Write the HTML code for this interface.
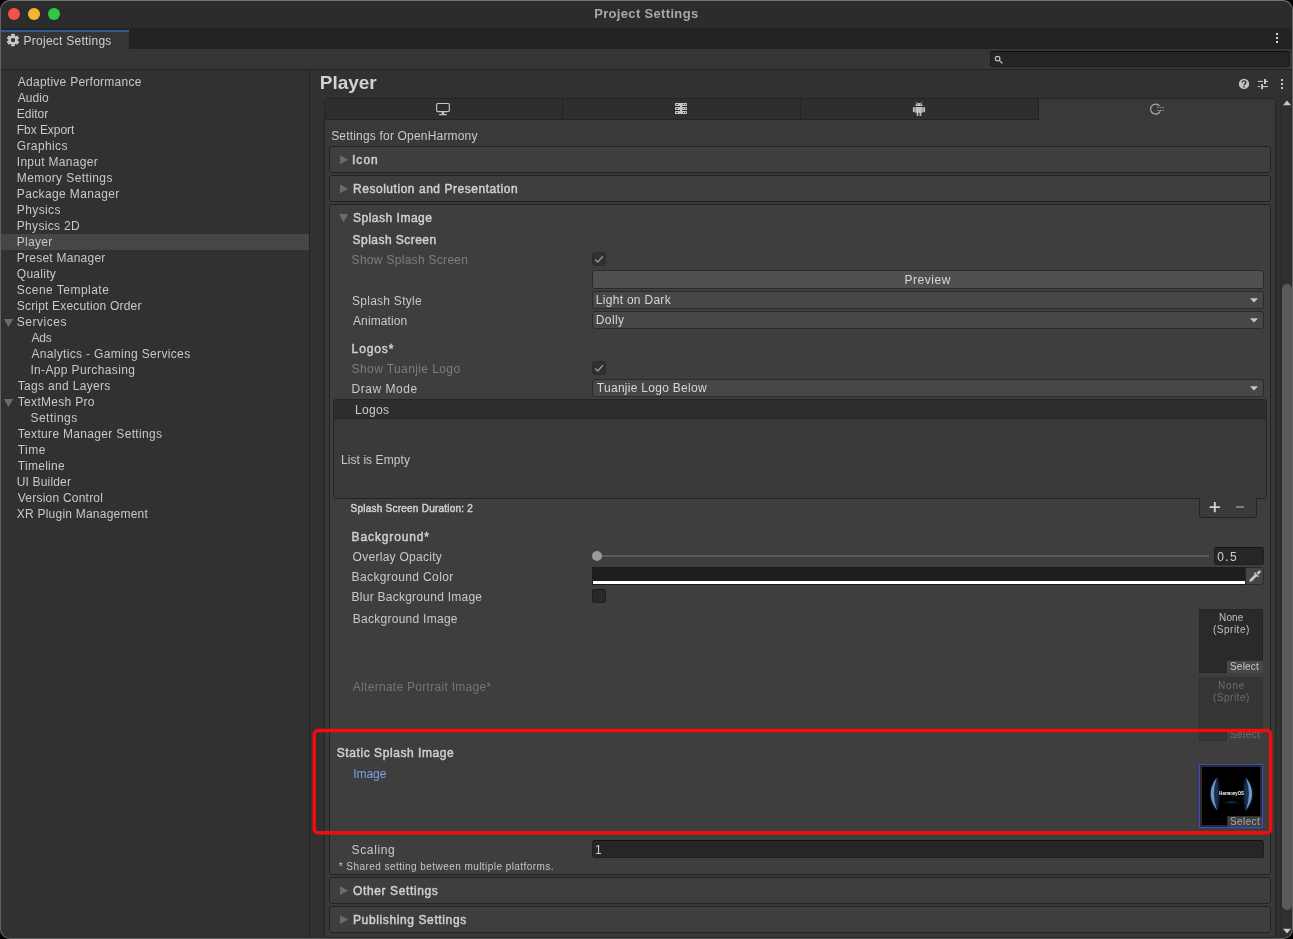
<!DOCTYPE html>
<html lang="en"><head><meta charset="utf-8"><title>Project Settings</title>
<style>
*{margin:0;padding:0;box-sizing:border-box}
html,body{width:1293px;height:939px;overflow:hidden;background:#000}
body{font-family:"Liberation Sans",sans-serif;font-size:12px;color:#c9c9c9;position:relative}
#win{will-change:transform;position:absolute;left:0;top:0;width:1293px;height:939px;border-radius:10px;overflow:hidden;background:#313131}
#edge{position:absolute;left:0;top:0;width:1293px;height:939px;border-radius:10px;border:1px solid #626262;border-top-color:#757575;border-bottom-color:#5e5e5e;pointer-events:none;z-index:50}
.a{position:absolute}
.t{position:absolute;white-space:nowrap;font-family:"Liberation Sans",sans-serif}
.hb{position:absolute;left:329px;width:942px;border:1px solid #222222;border-radius:3px;background:#3e3e3e}
.fld{position:absolute;background:#262626;border:1px solid #1f1f1f;border-top-color:#121212;border-radius:3px}
.dd{position:absolute;left:592px;width:672px;height:18px;background:#474747;border:1px solid #2a2a2a;border-radius:3px}
.cb{position:absolute;left:592px;width:14px;height:14px;border-radius:3px}
.obj{position:absolute;left:1199px;width:64px;height:64px}
.sel{position:absolute;left:1227px;width:36px;height:12px}
</style></head>
<body>
<div id="win">
<!-- ===== macOS title bar ===== -->
<div class="a" style="left:0;top:0;width:1293px;height:28px;background:#2c2c2c"></div>
<div class="a" style="left:8px;top:8px;width:12px;height:12px;border-radius:50%;background:#f4514d"></div>
<div class="a" style="left:28px;top:8px;width:12px;height:12px;border-radius:50%;background:#f6b42e"></div>
<div class="a" style="left:48px;top:8px;width:12px;height:12px;border-radius:50%;background:#2fc840"></div>
<!-- ===== dock tab strip ===== -->
<div class="a" style="left:0;top:28px;width:1293px;height:21px;background:#232323"></div>
<div class="a" style="left:0;top:28px;width:129px;height:2px;background:#242322"></div>
<div class="a" style="left:0;top:30px;width:129px;height:19px;background:#353535;border-top:2px solid #2e5b91"></div>
<svg class="a" style="left:6px;top:33px" width="14" height="14" viewBox="0 0 14 14"><g transform="translate(7,7.1)"><g fill="#c6c6c6"><circle r="4.7"/><rect x="-1.8" y="-6.25" width="3.6" height="12.5" rx=".6"/><rect x="-1.8" y="-6.25" width="3.6" height="12.5" rx=".6" transform="rotate(60)"/><rect x="-1.8" y="-6.25" width="3.6" height="12.5" rx=".6" transform="rotate(120)"/></g><circle r="2.15" fill="#353535"/></g></svg>
<div class="a" style="left:1276px;top:33px;width:2px;height:2px;background:#d4d4d4;box-shadow:0 4px 0 #d4d4d4,0 8px 0 #d4d4d4"></div>
<!-- ===== toolbar with search ===== -->
<div class="a" style="left:0;top:49px;width:1293px;height:21px;background:#363636;border-bottom:1px solid #232323"></div>
<div class="a" style="left:990px;top:51px;width:300px;height:16px;background:#242424;border:1px solid #1c1c1c;border-top-color:#0e0e0e;border-radius:3px"></div>
<svg class="a" style="left:993px;top:54px" width="11" height="11" viewBox="0 0 11 11"><circle cx="4.6" cy="4.6" r="2.3" fill="none" stroke="#c0c0c0" stroke-width="1.15"/><path d="M6.4 6.4 L9 9" stroke="#c0c0c0" stroke-width="1.25" stroke-linecap="round"/></svg>
<!-- ===== left tree panel ===== -->
<div class="a" style="left:0;top:70px;width:309px;height:869px;background:#313131"></div>
<div class="a" style="left:1px;top:234px;width:308px;height:16px;background:#464646"></div>
<div class="a" style="left:309px;top:70px;width:1px;height:869px;background:#232323"></div>
<svg class="a" style="left:3px;top:318px" width="12" height="10" viewBox="0 0 12 10"><path d="M.8 1 L10.2 1 L5.5 9 Z" fill="#6c6c6c"/></svg>
<svg class="a" style="left:3px;top:398px" width="12" height="10" viewBox="0 0 12 10"><path d="M.8 1 L10.2 1 L5.5 9 Z" fill="#6c6c6c"/></svg>
<!-- ===== right panel header icons ===== -->
<svg class="a" style="left:1238px;top:78px" width="12" height="12" viewBox="0 0 12 12"><circle cx="6" cy="5.9" r="5.2" fill="#c2c2c2"/><path d="M4.2 4.6 C4.2 2.4 7.9 2.4 7.9 4.5 C7.9 5.9 6.05 5.8 6.05 7.2" fill="none" stroke="#313131" stroke-width="1.35"/><rect x="5.35" y="8.1" width="1.4" height="1.4" fill="#313131"/></svg>
<svg class="a" style="left:1257px;top:78px" width="12" height="12" viewBox="0 0 12 12"><g fill="#c6c6c6"><rect x=".8" y="2.9" width="5.2" height="1.1"/><rect x="7" y="1" width="2" height="5"/><rect x="9" y="2.9" width="2" height="1.1"/><rect x=".8" y="8" width="2" height="1.1"/><rect x="4" y="6.1" width="2" height="5"/><rect x="6" y="8" width="5" height="1.1"/></g></svg>
<div class="a" style="left:1281px;top:79px;width:2px;height:2px;background:#c6c6c6;box-shadow:0 4px 0 #c6c6c6,0 8px 0 #c6c6c6"></div>
<!-- ===== scrollbar ===== -->
<div class="a" style="left:1280px;top:95px;width:13px;height:844px;background:#2f2f2f;border-left:1px solid #2a2a2a"></div>
<div class="a" style="left:1282px;top:284px;width:10px;height:626px;border-radius:5px;background:#5a5a5a"></div>
<svg class="a" style="left:1282px;top:99px" width="10" height="8" viewBox="0 0 10 8"><path d="M1 6.3 L9 6.3 L5 1.6 Z" fill="#c8c8c8"/></svg>
<svg class="a" style="left:1282px;top:927px" width="10" height="8" viewBox="0 0 10 8"><path d="M1 1.8 L9 1.8 L5 6.4 Z" fill="#c8c8c8"/></svg>
<!-- ===== content box ===== -->
<div class="a" style="left:324px;top:98px;width:952px;height:840px;background:#393939;border:1px solid #242424;border-radius:3px 3px 0 0"></div>
<!-- platform tabs -->
<div class="a" style="left:325px;top:99px;width:714px;height:21px;background:#2e2e2e;border-bottom:1px solid #242424;border-right:1px solid #242424;border-radius:2px 0 0 0"></div>
<div class="a" style="left:562px;top:99px;width:1px;height:20px;background:#242424"></div>
<div class="a" style="left:800px;top:99px;width:1px;height:20px;background:#242424"></div>
<!-- monitor -->
<svg class="a" style="left:435px;top:101px" width="16" height="16" viewBox="0 0 16 16"><rect x="1.65" y="2.45" width="12.7" height="8.1" rx="1.3" fill="none" stroke="#c6c6c6" stroke-width="1.15"/><rect x="6.8" y="10.9" width="2.4" height="2.4" fill="#c6c6c6"/><rect x="4" y="13" width="8" height="1.2" rx=".6" fill="#c6c6c6"/></svg>
<!-- server -->
<svg class="a" style="left:674px;top:102px" width="14" height="13" viewBox="0 0 14 13"><g fill="#c4c4c4"><rect x="1" y=".9" width="12" height="3" rx=".4"/><rect x="1" y="5" width="12" height="3" rx=".4"/><rect x="1" y="9" width="12" height="3.1" rx=".4"/><rect x="6" y="3.5" width="2.1" height="6"/></g><g fill="#2e2e2e"><rect x="2.1" y="2" width="1.9" height=".9" rx=".4"/><rect x="2.1" y="6.05" width="1.9" height=".9" rx=".4"/><rect x="2.1" y="10.1" width="1.9" height=".9" rx=".4"/><circle cx="9.5" cy="2.45" r=".55"/><circle cx="11.5" cy="2.45" r=".55"/><circle cx="9.5" cy="6.5" r=".55"/><circle cx="11.5" cy="6.5" r=".55"/><circle cx="9.5" cy="10.55" r=".55"/><circle cx="11.5" cy="10.55" r=".55"/></g></svg>
<!-- android -->
<svg class="a" style="left:912px;top:101px" width="14" height="16" viewBox="0 0 14 16"><g fill="#bebebe"><path d="M3.3 5.1 C3.3 .9 10.7 .9 10.7 5.1 Z"/><rect x="3.3" y="5.9" width="7.4" height="5.9" rx=".6"/><rect x=".9" y="6" width="1.9" height="5.2" rx=".8"/><rect x="11.2" y="6" width="1.9" height="5.2" rx=".8"/><rect x="4.7" y="11" width="1.7" height="4.1" rx=".7"/><rect x="7.6" y="11" width="1.7" height="4.1" rx=".7"/></g><path d="M3.9 .9 L5 2.6 M10.1 .9 L9 2.6" stroke="#bebebe" stroke-width=".75"/><circle cx="5.4" cy="3.5" r=".45" fill="#2e2e2e"/><circle cx="8.6" cy="3.5" r=".45" fill="#2e2e2e"/></svg>
<!-- openharmony -->
<svg class="a" style="left:1148px;top:102px" width="18" height="14" viewBox="0 0 18 14"><path d="M11.6 4.1 A5 5 0 1 0 12.5 8.1" fill="none" stroke="#a4a4a4" stroke-width="1.25"/><g fill="#8e8e8e"><rect x="9.3" y="5" width="1.6" height="1"/><rect x="12" y="5" width="1.3" height="1"/><rect x="14.3" y="5" width="1.6" height="1"/><rect x="9.3" y="7.9" width="1.6" height="1"/><rect x="12" y="7.9" width="1.3" height="1"/><rect x="14.3" y="7.9" width="1.6" height="1"/></g></svg>
<!-- help boxes -->
<div class="hb" style="top:146px;height:27px"></div>
<div class="hb" style="top:175px;height:27px"></div>
<div class="hb" style="top:204px;height:671px"></div>
<div class="hb" style="top:877px;height:27px"></div>
<div class="hb" style="top:906px;height:27px"></div>
<!-- foldout arrows -->
<svg class="a" style="left:339px;top:154px" width="11" height="12" viewBox="0 0 11 12"><path d="M1 1.4 L9.3 5.8 L1 10.2 Z" fill="#6b6b6b"/></svg>
<svg class="a" style="left:339px;top:183px" width="11" height="12" viewBox="0 0 11 12"><path d="M1 1.4 L9.3 5.8 L1 10.2 Z" fill="#6b6b6b"/></svg>
<svg class="a" style="left:338px;top:213px" width="12" height="11" viewBox="0 0 12 11"><path d="M1 1 L10.2 1 L5.6 9.2 Z" fill="#6b6b6b"/></svg>
<svg class="a" style="left:339px;top:885px" width="11" height="12" viewBox="0 0 11 12"><path d="M1 1.2 L9.3 5.6 L1 10 Z" fill="#6b6b6b"/></svg>
<svg class="a" style="left:339px;top:914px" width="11" height="12" viewBox="0 0 11 12"><path d="M1 1.2 L9.3 5.6 L1 10 Z" fill="#6b6b6b"/></svg>
<!-- splash screen controls -->
<div class="cb" style="top:252px;background:#303030;border:1px solid #2c2c2c"></div>
<svg class="a" style="left:592px;top:252px" width="14" height="14" viewBox="0 0 14 14"><path d="M3.1 7.4 L5.7 10 L10.9 4.3" fill="none" stroke="#9c9c9c" stroke-width="1.3"/></svg>
<div class="a" style="left:592px;top:270px;width:672px;height:19px;background:#505050;border:1px solid #2a2a2a;border-radius:3px"></div>
<div class="dd" style="top:291px"></div>
<div class="dd" style="top:311px"></div>
<div class="cb" style="top:361px;background:#303030;border:1px solid #2c2c2c"></div>
<svg class="a" style="left:592px;top:361px" width="14" height="14" viewBox="0 0 14 14"><path d="M3.1 7.4 L5.7 10 L10.9 4.3" fill="none" stroke="#9c9c9c" stroke-width="1.3"/></svg>
<div class="dd" style="top:379px"></div>
<svg class="a" style="left:1249px;top:297px" width="10" height="7" viewBox="0 0 10 7"><path d="M1 1.2 L9 1.2 L5 5.6 Z" fill="#c6c6c6"/></svg>
<svg class="a" style="left:1249px;top:317px" width="10" height="7" viewBox="0 0 10 7"><path d="M1 1.2 L9 1.2 L5 5.6 Z" fill="#c6c6c6"/></svg>
<svg class="a" style="left:1249px;top:385px" width="10" height="7" viewBox="0 0 10 7"><path d="M1 1.2 L9 1.2 L5 5.6 Z" fill="#c6c6c6"/></svg>
<!-- logos list -->
<div class="a" style="left:333px;top:399px;width:934px;height:100px;background:#3a3a3a;border:1px solid #242424;border-radius:3px"></div>
<div class="a" style="left:334px;top:400px;width:932px;height:19px;background:#2e2e2e;border-bottom:1px solid #242424;border-radius:2px 2px 0 0"></div>
<div class="a" style="left:1199px;top:498px;width:58px;height:20px;background:#3a3a3a;border:1px solid #242424;border-top:none;border-radius:0 0 3px 3px"></div>
<div class="a" style="left:1200px;top:498px;width:56px;height:1px;background:#3a3a3a"></div>
<svg class="a" style="left:1209px;top:501px" width="12" height="12" viewBox="0 0 12 12"><path d="M5.8 .9 V11.3 M.6 6.1 H11" stroke="#d2d2d2" stroke-width="1.9" fill="none"/></svg>
<div class="a" style="left:1236px;top:506px;width:8px;height:2px;background:#7c7c7c"></div>
<!-- background group -->
<div class="a" style="left:597px;top:555px;width:612px;height:2px;background:#5b5b5b"></div>
<div class="a" style="left:592px;top:551px;width:10px;height:10px;border-radius:50%;background:#9a9a9a"></div>
<div class="fld" style="left:1214px;top:547px;width:50px;height:18px"></div>
<div class="a" style="left:592px;top:567px;width:654px;height:18px;background:#1f1e1c;border:1px solid #1b1b1b;border-top-color:#1f1e1c"></div>
<div class="a" style="left:593px;top:581px;width:652px;height:3px;background:#ffffff"></div>
<div class="a" style="left:1245px;top:567px;width:19px;height:18px;background:#454545;border:1px solid #2a2a2a;border-radius:0 3px 3px 0"></div>
<svg class="a" style="left:1248px;top:569px" width="14" height="14" viewBox="0 0 14 14"><g fill="#c8c8c8"><path d="M1.4 12.7 L1.7 10.5 L7.4 4.8 L9.3 6.7 L3.6 12.4 Z"/><path d="M6.9 3.2 L10.9 7.2 L9.9 8.2 L5.9 4.2 Z"/><path d="M8.6 3.9 L10.5 2 C11.2 1.3 12.2 1.4 12.6 2 C13 2.6 12.8 3.3 12.1 4 L10.2 5.8 Z"/></g></svg>
<div class="cb" style="top:589px;background:#282828;border:1px solid #1f1f1f;border-top-color:#171717"></div>
<!-- object fields -->
<div class="obj" style="top:609px;background:#2a2a2a;border:1px solid #262626"></div>
<div class="a" style="left:1226px;top:660px;width:37px;height:13px;background:#474747;border-left:1px solid #2c2c2c;border-top:1px solid #2c2c2c"></div>
<div class="obj" style="top:677px;background:#353535;border:1px solid #323232"></div>
<div class="a" style="left:1226px;top:728px;width:37px;height:13px;background:#404040;border-left:1px solid #343434;border-top:1px solid #343434"></div>
<div class="obj" style="top:764px;background:#2a2a2a;border:1px solid #3d49d6"></div>
<svg class="a" style="left:1202px;top:767px" width="58" height="58" viewBox="0 0 58 58"><defs><radialGradient id="gl" cx="50%" cy="50%" r="50%"><stop offset="0" stop-color="#203a5e" stop-opacity=".95"/><stop offset="1" stop-color="#000" stop-opacity="0"/></radialGradient><filter id="bl" x="-40%" y="-20%" width="180%" height="140%"><feGaussianBlur stdDeviation=".75"/></filter><filter id="bl2" x="-40%" y="-20%" width="180%" height="140%"><feGaussianBlur stdDeviation="1.3"/></filter></defs><rect width="58" height="58" fill="#000"/><g filter="url(#bl2)" fill="#1b3152"><path d="M15 10 Q1.5 27 15 44 Q19.5 27 15 10 Z"/><path d="M43.8 10 Q57.3 27 43.8 44 Q39.3 27 43.8 10 Z"/></g><g filter="url(#bl)" fill="#7399cb"><path d="M14.8 10.8 Q2.6 27 15 43.2 Q8.8 27 14.8 10.8 Z"/><path d="M44 10.8 Q56.2 27 43.8 43.2 Q50 27 44 10.8 Z"/></g><ellipse cx="29.4" cy="35.2" rx="12.5" ry="2.6" fill="url(#gl)"/><text x="29.6" y="28.3" text-anchor="middle" font-family="Liberation Sans, sans-serif" font-size="5.4" font-weight="bold" fill="#fff" textLength="24.5" lengthAdjust="spacingAndGlyphs">HarmonyOS</text></svg>
<div class="a" style="left:1227px;top:816px;width:35px;height:11px;background:#404040;border-left:1px solid #2e2e2e;border-top:1px solid #2e2e2e"></div>
<div class="fld" style="left:592px;top:840px;width:672px;height:18px"></div>
<!-- red highlight -->
<svg class="a" style="left:308px;top:724px;z-index:20" width="970" height="116" viewBox="308 724 970 116"><rect x="314.25" y="730.6" width="956.4" height="102.15" rx="3.6" ry="3.6" fill="none" stroke="#f30c0a" stroke-width="3.5"/></svg>

<!-- text -->
<span class="t" id="t0" style="left:17.79px;top:74px;font-size:12px;line-height:16px;color:#c8c8c8;letter-spacing:0.258px;">Adaptive Performance</span>
<span class="t" id="t1" style="left:17.79px;top:90px;font-size:12px;line-height:16px;color:#c8c8c8;letter-spacing:0.050px;">Audio</span>
<span class="t" id="t2" style="left:16.79px;top:106px;font-size:12px;line-height:16px;color:#c8c8c8;letter-spacing:0.040px;">Editor</span>
<span class="t" id="t3" style="left:16.79px;top:122px;font-size:12px;line-height:16px;color:#c8c8c8;letter-spacing:-0.056px;">Fbx Export</span>
<span class="t" id="t4" style="left:16.79px;top:138px;font-size:12px;line-height:16px;color:#c8c8c8;letter-spacing:0.371px;">Graphics</span>
<span class="t" id="t5" style="left:16.79px;top:154px;font-size:12px;line-height:16px;color:#c8c8c8;letter-spacing:0.292px;">Input Manager</span>
<span class="t" id="t6" style="left:16.79px;top:170px;font-size:12px;line-height:16px;color:#c8c8c8;letter-spacing:0.400px;">Memory Settings</span>
<span class="t" id="t7" style="left:16.79px;top:186px;font-size:12px;line-height:16px;color:#c8c8c8;letter-spacing:0.371px;">Package Manager</span>
<span class="t" id="t8" style="left:16.79px;top:202px;font-size:12px;line-height:16px;color:#c8c8c8;letter-spacing:0.400px;">Physics</span>
<span class="t" id="t9" style="left:16.79px;top:218px;font-size:12px;line-height:16px;color:#c8c8c8;letter-spacing:0.311px;">Physics 2D</span>
<span class="t" id="t10" style="left:16.79px;top:234px;font-size:12px;line-height:16px;color:#c8c8c8;letter-spacing:0.300px;">Player</span>
<span class="t" id="t11" style="left:16.79px;top:250px;font-size:12px;line-height:16px;color:#c8c8c8;letter-spacing:0.246px;">Preset Manager</span>
<span class="t" id="t12" style="left:16.79px;top:266px;font-size:12px;line-height:16px;color:#c8c8c8;letter-spacing:0.267px;">Quality</span>
<span class="t" id="t13" style="left:16.79px;top:282px;font-size:12px;line-height:16px;color:#c8c8c8;letter-spacing:0.477px;">Scene Template</span>
<span class="t" id="t14" style="left:16.79px;top:298px;font-size:12px;line-height:16px;color:#c8c8c8;letter-spacing:0.186px;">Script Execution Order</span>
<span class="t" id="t15" style="left:16.79px;top:314px;font-size:12px;line-height:16px;color:#c8c8c8;letter-spacing:0.514px;">Services</span>
<span class="t" id="t16" style="left:31.39px;top:330px;font-size:12px;line-height:16px;color:#c8c8c8;letter-spacing:-0.150px;">Ads</span>
<span class="t" id="t17" style="left:31.39px;top:346px;font-size:12px;line-height:16px;color:#c8c8c8;letter-spacing:0.335px;">Analytics - Gaming Services</span>
<span class="t" id="t18" style="left:30.39px;top:362px;font-size:12px;line-height:16px;color:#c8c8c8;letter-spacing:0.362px;">In-App Purchasing</span>
<span class="t" id="t19" style="left:17.79px;top:378px;font-size:12px;line-height:16px;color:#c8c8c8;letter-spacing:0.321px;">Tags and Layers</span>
<span class="t" id="t20" style="left:17.79px;top:394px;font-size:12px;line-height:16px;color:#c8c8c8;letter-spacing:0.309px;">TextMesh Pro</span>
<span class="t" id="t21" style="left:30.39px;top:410px;font-size:12px;line-height:16px;color:#c8c8c8;letter-spacing:0.500px;">Settings</span>
<span class="t" id="t22" style="left:17.79px;top:426px;font-size:12px;line-height:16px;color:#c8c8c8;letter-spacing:0.322px;">Texture Manager Settings</span>
<span class="t" id="t23" style="left:17.79px;top:442px;font-size:12px;line-height:16px;color:#c8c8c8;letter-spacing:0.433px;">Time</span>
<span class="t" id="t24" style="left:17.79px;top:458px;font-size:12px;line-height:16px;color:#c8c8c8;letter-spacing:0.286px;">Timeline</span>
<span class="t" id="t25" style="left:16.79px;top:474px;font-size:12px;line-height:16px;color:#c8c8c8;letter-spacing:0.156px;">UI Builder</span>
<span class="t" id="t26" style="left:17.79px;top:490px;font-size:12px;line-height:16px;color:#c8c8c8;letter-spacing:0.221px;">Version Control</span>
<span class="t" id="t27" style="left:16.79px;top:506px;font-size:12px;line-height:16px;color:#c8c8c8;letter-spacing:0.226px;">XR Plugin Management</span>
<span class="t" id="t28" style="left:594.19px;top:6px;font-size:13px;line-height:16px;color:#a8a8a8;font-weight:bold;letter-spacing:0.333px;">Project Settings</span>
<span class="t" id="t29" style="left:23.60px;top:33px;font-size:12px;line-height:16px;color:#d0d0d0;letter-spacing:0.247px;">Project Settings</span>
<span class="t" id="t30" style="left:319.79px;top:71px;font-size:19px;line-height:24px;color:#d2d2d2;font-weight:bold;letter-spacing:-0.040px;">Player</span>
<span class="t" id="t31" style="left:331.19px;top:128px;font-size:12px;line-height:16px;color:#c9c9c9;letter-spacing:0.183px;">Settings for OpenHarmony</span>
<span class="t" id="t32" style="left:352.00px;top:152px;font-size:12px;line-height:16px;color:#d0d0d0;-webkit-text-stroke:0.45px;letter-spacing:1.033px;">Icon</span>
<span class="t" id="t33" style="left:353.00px;top:181px;font-size:12px;line-height:16px;color:#d0d0d0;-webkit-text-stroke:0.45px;letter-spacing:0.535px;">Resolution and Presentation</span>
<span class="t" id="t34" style="left:353.00px;top:210px;font-size:12px;line-height:16px;color:#d0d0d0;-webkit-text-stroke:0.45px;letter-spacing:0.509px;">Splash Image</span>
<span class="t" id="t35" style="left:352.60px;top:232px;font-size:12px;line-height:16px;color:#d0d0d0;-webkit-text-stroke:0.45px;letter-spacing:0.458px;">Splash Screen</span>
<span class="t" id="t36" style="left:351.60px;top:252px;font-size:12px;line-height:16px;color:#7d7d7d;letter-spacing:0.294px;">Show Splash Screen</span>
<span class="t" id="t37" style="left:904.39px;top:272px;font-size:12px;line-height:16px;color:#d6d6d6;letter-spacing:0.567px;">Preview</span>
<span class="t" id="t38" style="left:352.00px;top:293px;font-size:12px;line-height:16px;color:#c9c9c9;letter-spacing:0.264px;">Splash Style</span>
<span class="t" id="t39" style="left:353.00px;top:313px;font-size:12px;line-height:16px;color:#c9c9c9;letter-spacing:0.112px;">Animation</span>
<span class="t" id="t40" style="left:595.79px;top:292px;font-size:12px;line-height:16px;color:#d6d6d6;letter-spacing:0.292px;">Light on Dark</span>
<span class="t" id="t41" style="left:595.79px;top:312px;font-size:12px;line-height:16px;color:#d6d6d6;letter-spacing:0.400px;">Dolly</span>
<span class="t" id="t42" style="left:351.60px;top:341px;font-size:12px;line-height:16px;color:#d0d0d0;-webkit-text-stroke:0.45px;letter-spacing:0.880px;">Logos*</span>
<span class="t" id="t43" style="left:351.60px;top:361px;font-size:12px;line-height:16px;color:#7d7d7d;letter-spacing:0.400px;">Show Tuanjie Logo</span>
<span class="t" id="t44" style="left:351.60px;top:381px;font-size:12px;line-height:16px;color:#c9c9c9;letter-spacing:0.525px;">Draw Mode</span>
<span class="t" id="t45" style="left:596.79px;top:380px;font-size:12px;line-height:16px;color:#d6d6d6;letter-spacing:0.288px;">Tuanjie Logo Below</span>
<span class="t" id="t46" style="left:355.00px;top:402px;font-size:12px;line-height:16px;color:#c9c9c9;letter-spacing:0.325px;">Logos</span>
<span class="t" id="t47" style="left:341.00px;top:452px;font-size:12px;line-height:16px;color:#c9c9c9;letter-spacing:0.075px;">List is Empty</span>
<span class="t" id="t48" style="left:350.60px;top:503px;font-size:10px;line-height:12px;color:#d0d0d0;-webkit-text-stroke:0.45px;letter-spacing:0.233px;">Splash Screen Duration: 2</span>
<span class="t" id="t49" style="left:351.60px;top:529px;font-size:12px;line-height:16px;color:#d0d0d0;-webkit-text-stroke:0.45px;letter-spacing:0.870px;">Background*</span>
<span class="t" id="t50" style="left:352.60px;top:549px;font-size:12px;line-height:16px;color:#c9c9c9;letter-spacing:0.279px;">Overlay Opacity</span>
<span class="t" id="t51" style="left:351.60px;top:569px;font-size:12px;line-height:16px;color:#c9c9c9;letter-spacing:0.373px;">Background Color</span>
<span class="t" id="t52" style="left:351.60px;top:589px;font-size:12px;line-height:16px;color:#c9c9c9;letter-spacing:0.250px;">Blur Background Image</span>
<span class="t" id="t53" style="left:352.79px;top:611px;font-size:12px;line-height:16px;color:#c9c9c9;letter-spacing:0.267px;">Background Image</span>
<span class="t" id="t54" style="left:352.79px;top:679px;font-size:12px;line-height:16px;color:#747474;letter-spacing:0.292px;">Alternate Portrait Image*</span>
<span class="t" id="t55" style="left:336.79px;top:745px;font-size:12px;line-height:16px;color:#d0d0d0;-webkit-text-stroke:0.45px;letter-spacing:0.567px;">Static Splash Image</span>
<span class="t" id="t56" style="left:353.19px;top:766px;font-size:12px;line-height:16px;color:#7ba0e8;letter-spacing:-0.025px;">Image</span>
<span class="t" id="t57" style="left:351.60px;top:842px;font-size:12px;line-height:16px;color:#c9c9c9;letter-spacing:0.633px;">Scaling</span>
<span class="t" id="t58" style="left:338.79px;top:861px;font-size:10px;line-height:12px;color:#c4c4c4;letter-spacing:0.444px;">* Shared setting between multiple platforms.</span>
<span class="t" id="t59" style="left:353.00px;top:883px;font-size:12px;line-height:16px;color:#d0d0d0;-webkit-text-stroke:0.45px;letter-spacing:0.623px;">Other Settings</span>
<span class="t" id="t60" style="left:353.00px;top:912px;font-size:12px;line-height:16px;color:#d0d0d0;-webkit-text-stroke:0.45px;letter-spacing:0.617px;">Publishing Settings</span>
<span class="t" id="t61" style="left:1217.19px;top:549px;font-size:12px;line-height:16px;color:#d0d0d0;letter-spacing:1.450px;">0.5</span>
<span class="t" id="t62" style="left:595.00px;top:842px;font-size:12px;line-height:16px;color:#d0d0d0;letter-spacing:-0.600px;">1</span>
<span class="t" id="t63" style="left:1219.00px;top:612px;font-size:10px;line-height:12px;color:#c0c0c0;letter-spacing:0.167px;">None</span>
<span class="t" id="t64" style="left:1213.00px;top:624px;font-size:10px;line-height:12px;color:#c0c0c0;letter-spacing:0.500px;">(Sprite)</span>
<span class="t" id="t65" style="left:1230.00px;top:661px;font-size:10px;line-height:12px;color:#c6c6c6;letter-spacing:0.200px;">Select</span>
<span class="t" id="t66" style="left:1218.00px;top:680px;font-size:10px;line-height:12px;color:#6c6c6c;letter-spacing:0.833px;">None</span>
<span class="t" id="t67" style="left:1213.00px;top:692px;font-size:10px;line-height:12px;color:#6c6c6c;letter-spacing:0.500px;">(Sprite)</span>
<span class="t" id="t68" style="left:1230.00px;top:729px;font-size:10px;line-height:12px;color:#6e6e6e;letter-spacing:0.400px;">Select</span>
<span class="t" id="t69" style="left:1230.00px;top:816px;font-size:10px;line-height:12px;color:#a6a6a6;letter-spacing:0.400px;">Select</span>
</div>
<div id="edge"></div>
</body></html>
